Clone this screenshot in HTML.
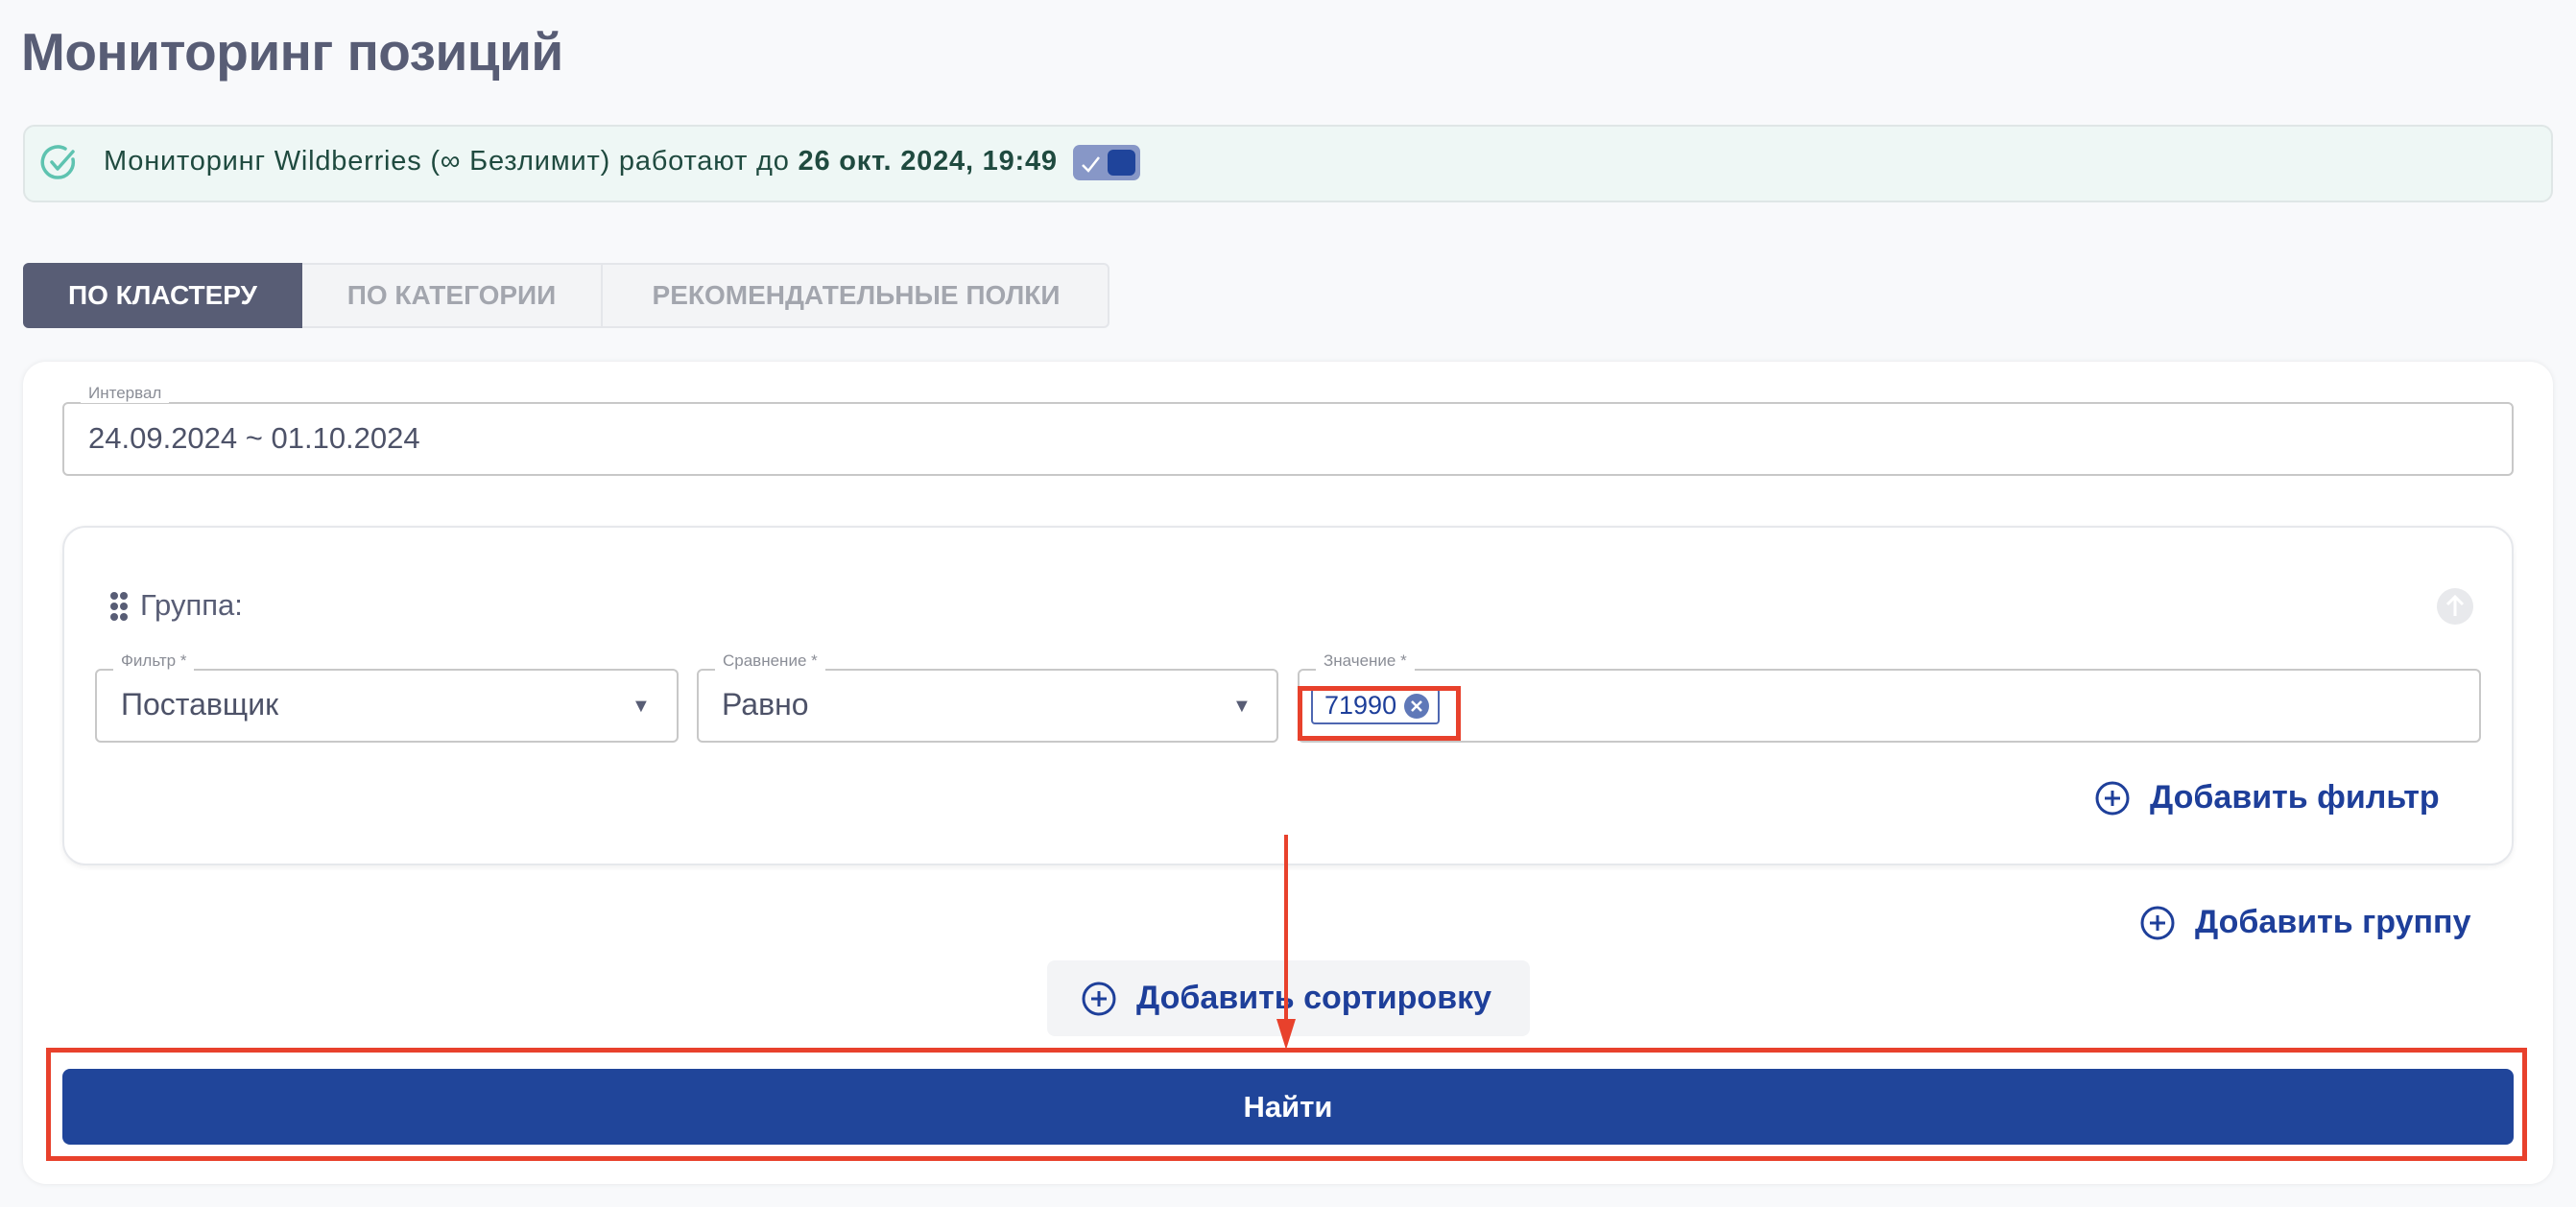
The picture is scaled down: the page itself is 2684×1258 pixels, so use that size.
<!DOCTYPE html>
<html><head><meta charset="utf-8"><style>
*{box-sizing:border-box;margin:0;padding:0}
body{width:2684px;height:1258px;background:#f8f9fb;font-family:"Liberation Sans","Noto Sans CJK SC",sans-serif;position:relative;overflow:hidden;color:#585d75}
.a{position:absolute}
.title{left:22px;top:22px;font-size:55px;font-weight:bold;color:#585d75;letter-spacing:-0.5px}
.banner{left:24px;top:130px;width:2636px;height:81px;background:#eef7f5;border:2px solid #dfe6e6;border-radius:12px}
.btext{left:108px;top:152px;font-size:29px;letter-spacing:0.8px;color:#1f4a3f;white-space:nowrap}
.toggle{left:1118px;top:151px;width:70px;height:37px;background:#8797c7;border-radius:7px}
.tabs{left:24px;top:274px;height:68px;width:1132px;background:#f3f4f6;border:2px solid #e4e6ea;border-radius:6px}
.tab{top:274px;height:68px;font-size:28px;font-weight:bold;color:#a3a6ae;display:flex;align-items:center;justify-content:center}
.card{left:24px;top:377px;width:2636px;height:857px;background:#fff;border-radius:24px;box-shadow:0 0 6px rgba(0,0,0,.08)}
.inp{border:2px solid #c8c8c8;border-radius:6px;background:#fff}
.lbl{font-size:17px;color:#8a8d96;background:#fff;padding:0 8px}
.blue{color:#1e3f9a;font-weight:bold;font-size:34px;white-space:nowrap;display:flex;align-items:center;gap:20px}
</style></head><body>
<div class="a title">Мониторинг позиций</div>
<div class="a banner"></div>
<svg class="a" style="left:42px;top:150px" width="40" height="40" viewBox="0 0 40 40"><path d="M34 16 A16 16 0 1 1 26 5" fill="none" stroke="#5ec3b0" stroke-width="3.5" stroke-linecap="round"/><path d="M12 19 l6 7 L34 8" fill="none" stroke="#5ec3b0" stroke-width="3.5" stroke-linecap="round" stroke-linejoin="round"/></svg>
<div class="a btext">Мониторинг Wildberries (∞ Безлимит) работают до <b>26 окт. 2024, 19:49</b></div>
<div class="a toggle"><svg class="a" style="left:8px;top:10px" width="22" height="20"><path d="M2 11 l6 6 L19 3" stroke="#fff" stroke-width="2.5" fill="none"/></svg><div class="a" style="left:36px;top:5px;width:29px;height:27px;background:#1f449b;border-radius:6px"></div></div>
<div class="a tabs"></div>
<div class="a tab" style="left:24px;width:291px;background:#585d75;color:#fff;border-radius:6px 0 0 6px">ПО КЛАСТЕРУ</div>
<div class="a tab" style="left:315px;width:313px;border-right:2px solid #e4e6ea">ПО КАТЕГОРИИ</div>
<div class="a tab" style="left:628px;width:528px">РЕКОМЕНДАТЕЛЬНЫЕ ПОЛКИ</div>
<div class="a card"></div>
<div class="a inp" style="left:65px;top:419px;width:2554px;height:77px"></div>
<div class="a lbl" style="left:84px;top:400px">Интервал</div>
<div class="a" style="left:92px;top:439px;font-size:31px;color:#4d5268">24.09.2024 ~ 01.10.2024</div>
<div class="a" style="left:65px;top:548px;width:2554px;height:354px;border:2px solid #e6e8ec;border-radius:24px;box-shadow:0 2px 6px rgba(0,0,0,.06);background:#fff"></div>
<svg class="a" style="left:114px;top:616px" width="20" height="32"><g fill="#585d75"><circle cx="5" cy="5" r="4"/><circle cx="15" cy="5" r="4"/><circle cx="5" cy="16" r="4"/><circle cx="15" cy="16" r="4"/><circle cx="5" cy="27" r="4"/><circle cx="15" cy="27" r="4"/></g></svg>
<div class="a" style="left:146px;top:613px;font-size:31px;color:#585d75">Группа:</div>
<svg class="a" style="left:2538px;top:612px" width="40" height="40"><circle cx="20" cy="20" r="19" fill="#e8e9ec"/><path d="M20 30 V10 M12 18 l8-8 8 8" stroke="#fff" stroke-width="3" fill="none"/></svg>
<div class="a inp" style="left:99px;top:697px;width:608px;height:77px"></div>
<div class="a lbl" style="left:118px;top:679px">Фильтр *</div>
<div class="a" style="left:126px;top:716px;font-size:32px;color:#4d5268">Поставщик</div>
<div class="a" style="left:658px;top:725px;font-size:20px;color:#585d75">▼</div>
<div class="a inp" style="left:726px;top:697px;width:606px;height:77px"></div>
<div class="a lbl" style="left:745px;top:679px">Сравнение *</div>
<div class="a" style="left:752px;top:716px;font-size:32px;color:#4d5268">Равно</div>
<div class="a" style="left:1284px;top:725px;font-size:20px;color:#585d75">▼</div>
<div class="a inp" style="left:1352px;top:697px;width:1233px;height:77px"></div>
<div class="a lbl" style="left:1371px;top:679px">Значение *</div>
<div class="a" style="left:1366px;top:717px;width:134px;height:38px;border:2px solid #4e67b1;border-radius:4px;background:#fff"></div>
<div class="a" style="left:1380px;top:720px;font-size:27px;color:#1e3f9a">71990</div>
<svg class="a" style="left:1462px;top:722px" width="28" height="28"><circle cx="14" cy="14" r="13" fill="#5f78b8"/><path d="M9 9 l10 10 M19 9 l-10 10" stroke="#fff" stroke-width="2.5"/></svg>
<div class="a" style="left:1352px;top:715px;width:170px;height:57px;border:5px solid #e8412c"></div>
<div class="a blue" style="left:2182px;top:812px"><svg width="38" height="38"><circle cx="19" cy="19" r="16" fill="none" stroke="#1e3f9a" stroke-width="3"/><path d="M19 11 V27 M11 19 H27" stroke="#1e3f9a" stroke-width="3"/></svg>Добавить фильтр</div>
<div class="a blue" style="left:2229px;top:942px"><svg width="38" height="38"><circle cx="19" cy="19" r="16" fill="none" stroke="#1e3f9a" stroke-width="3"/><path d="M19 11 V27 M11 19 H27" stroke="#1e3f9a" stroke-width="3"/></svg>Добавить группу</div>
<div class="a" style="left:1091px;top:1001px;width:503px;height:79px;background:#f3f4f6;border-radius:8px"></div>
<div class="a blue" style="left:1126px;top:1021px"><svg width="38" height="38"><circle cx="19" cy="19" r="16" fill="none" stroke="#1e3f9a" stroke-width="3"/><path d="M19 11 V27 M11 19 H27" stroke="#1e3f9a" stroke-width="3"/></svg>Добавить сортировку</div>
<div class="a" style="left:65px;top:1114px;width:2554px;height:79px;background:#20459a;border-radius:8px;color:#fff;font-size:31px;font-weight:bold;display:flex;align-items:center;justify-content:center">Найти</div>
<div class="a" style="left:48px;top:1092px;width:2585px;height:118px;border:5px solid #e8412c"></div>
<div class="a" style="left:1338px;top:870px;width:4px;height:200px;background:#e8412c"></div>
<svg class="a" style="left:1330px;top:1062px" width="20" height="32"><path d="M0 0 H20 L10 32 Z" fill="#e8412c"/></svg>
</body></html>
